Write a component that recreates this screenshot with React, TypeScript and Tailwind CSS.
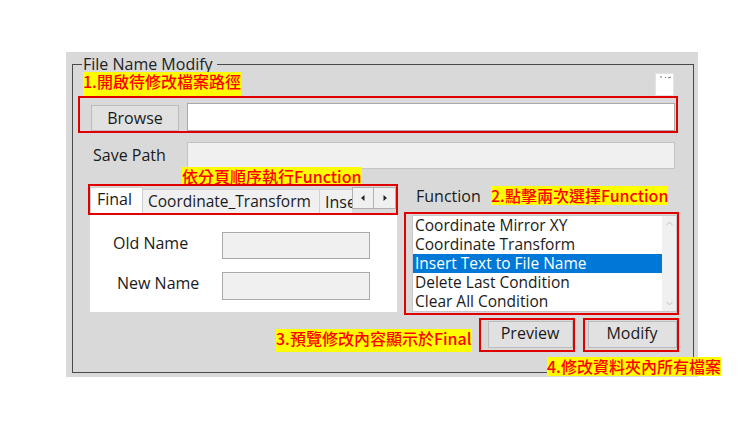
import { ChevronDown, ChevronUp } from 'lucide-react';

const ui = { fontFamily: '"Open Sans", "Noto Sans", sans-serif' };
const cjk = { fontFamily: '"Noto Sans CJK TC", "Noto Sans", sans-serif' };

const Note = ({ children, className = '' }: { children: React.ReactNode; className?: string }) => (
    <div
        style={cjk}
        className={`w-fit whitespace-nowrap bg-[#ffff00] text-[#ff0000] text-[16px] font-medium leading-[19px] ${className}`}
    >
        {children}
    </div>
);

const functions = [
    'Coordinate Mirror XY',
    'Coordinate Transform',
    'Insert Text to File Name',
    'Delete Last Condition',
    'Clear All Condition',
];

export default function App() {
    return (
        <div style={ui} className="w-[755px] h-[425px] bg-white pt-[52px] pl-[66px] text-[#1a1a1a] text-[16px]">
            <div className="w-[632px] h-[325px] bg-[#d9d9d9] pt-[12px] pl-[6px]">
                {/* group box */}
                <div className="relative w-[622px] h-[309px] border border-[#4b4b4b]">
                    <div className="absolute left-[9px] -top-[9px] bg-[#d9d9d9] pl-[1px] pr-[4px] leading-[16px] text-[16px] text-[#222]">
                        File Name Modify
                    </div>

                    <div className="flex justify-between h-[31px]">
                        <Note className="ml-[10px] mt-[7px] relative">1.開啟待修改檔案路徑</Note>
                        <div className="mt-[8px] mr-[19px] w-[19px] h-[23px] bg-white border border-[#e4e4e4]">
                            <svg width="17" height="8" viewBox="0 0 17 8">
                                <path d="M5 2v2M9 3l1 1M12 4l3-1" stroke="#777" strokeWidth="1" fill="none" />
                            </svg>
                        </div>
                    </div>

                    <div className="ml-[5px] w-[600px] h-[37px] border-2 border-[#e00000] flex items-end">
                        <button className="ml-[11px] w-[88px] h-[26px] bg-[#e1e1e1] border border-[#bcbcbc] text-[16px] leading-none">
                            Browse
                        </button>
                        <div className="ml-[8px] w-[488px] h-[28px] bg-white border border-[#a9a9a9]" />
                    </div>

                    <div className="flex items-center mt-[9px] h-[27px]">
                        <div className="w-[114px] pl-[20px] -mt-[2px]">Save Path</div>
                        <div className="w-[488px] h-[27px] bg-[#f0f0f0] border border-[#c4c4c4]" />
                    </div>

                    <div className="flex">
                        {/* left: tabs */}
                        <div className="ml-[15px] w-[310px]">
                            <Note className="ml-[94px] -mt-[2px] relative z-10 leading-[18px]">依分頁順序執行Function</Note>
                            <div className="-mt-[2px] w-[310px] h-[31px] border-2 border-[#e00000] flex items-end overflow-hidden relative z-10">
                                <div className="w-[53px] h-[26px] bg-white border-t border-l border-r border-[#d0d0d0] flex items-center pl-[6px] pb-[3px]">
                                    Final
                                </div>
                                <div className="w-[177px] h-[24px] bg-[#f0f0f0] border-t border-r border-[#d0d0d0] flex items-center pl-[5px] whitespace-nowrap text-[15.5px]">
                                    Coordinate_Transform
                                </div>
                                <div className="w-[32px] h-[24px] bg-[#f0f0f0] border-t border-[#d0d0d0] flex items-center pl-[5px] overflow-hidden whitespace-nowrap">
                                    Insert
                                </div>
                                <div className="self-start mt-[1px] flex">
                                    <div className="w-[22px] h-[22px] bg-[#f0f0f0] border border-[#b0b0b0] flex items-center justify-center">
                                        <svg width="4" height="6" viewBox="0 0 4 6">
                                            <path d="M3.5 0L0 3l3.5 3z" fill="#222" />
                                        </svg>
                                    </div>
                                    <div className="w-[22px] h-[22px] bg-[#f0f0f0] border border-l-0 border-[#b0b0b0] flex items-center justify-center">
                                        <svg width="4" height="6" viewBox="0 0 4 6">
                                            <path d="M0.5 0L4 3l-3.5 3z" fill="#222" />
                                        </svg>
                                    </div>
                                </div>
                            </div>
                            <div className="-mt-[2px] ml-[2px] w-[307px] h-[99px] bg-white pt-[19px]">
                                <div className="flex items-center h-[27px]">
                                    <div className="w-[132px] pl-[23px] -mt-[6px]">Old Name</div>
                                    <div className="w-[148px] h-[27px] bg-[#f0f0f0] border border-[#a9a9a9]" />
                                </div>
                                <div className="flex items-center h-[28px] mt-[13px]">
                                    <div className="w-[132px] pl-[27px] -mt-[7px]">New Name</div>
                                    <div className="w-[148px] h-[28px] bg-[#f0f0f0] border border-[#a9a9a9]" />
                                </div>
                            </div>
                        </div>

                        {/* right: function list */}
                        <div className="ml-[6px]">
                            <div className="mt-[17px] h-[19px] flex items-center">
                                <div className="ml-[12px] w-[75px]">Function</div>
                                <Note>2.點擊兩次選擇Function</Note>
                            </div>
                            <div className="mt-[7px] w-[275px] h-[103px] border-2 border-[#e00000] flex pt-[1px]">
                                <div className="ml-[6px] w-[250px] h-[97px] bg-white border-l border-t border-b border-[#c8c8c8] leading-[19px] text-[15.5px]">
                                    {functions.map((f, i) => (
                                        <div
                                            key={f}
                                            className={`h-[19px] pl-[2px] whitespace-nowrap ${i === 2 ? 'bg-[#0078d7] text-white' : ''}`}
                                        >
                                            {f}
                                        </div>
                                    ))}
                                </div>
                                <div className="w-[15px] h-[97px] bg-[#f0f0f0] border-t border-b border-r border-[#c8c8c8] flex flex-col justify-between items-center py-[2px]">
                                    <ChevronUp size={11} strokeWidth={1.5} className="text-[#a8a8a8]" />
                                    <ChevronDown size={11} strokeWidth={1.5} className="text-[#a8a8a8]" />
                                </div>
                            </div>
                        </div>
                    </div>

                    <div className="flex mt-[3px] h-[34px]">
                        <Note className="ml-[203px] mt-[11px]">3.預覽修改內容顯示於Final</Note>
                        <div className="ml-[7px] w-[96px] h-[34px] border-2 border-[#e00000] pt-[1px] pl-[7px]">
                            <button className="w-[85px] h-[27px] bg-[#e1e1e1] border border-[#bcbcbc] text-[16px] leading-none pb-[3px]">
                                Preview
                            </button>
                        </div>
                        <div className="ml-[8px] w-[96px] h-[34px] border-2 border-[#e00000] pt-[1px] pl-[3px]">
                            <button className="w-[89px] h-[27px] bg-[#e1e1e1] border border-[#bcbcbc] text-[16px] leading-none pb-[3px]">
                                Modify
                            </button>
                        </div>
                    </div>

                    <Note className="ml-[474px] mt-[5px] relative">4.修改資料夾內所有檔案</Note>
                </div>
            </div>
        </div>
    );
}
